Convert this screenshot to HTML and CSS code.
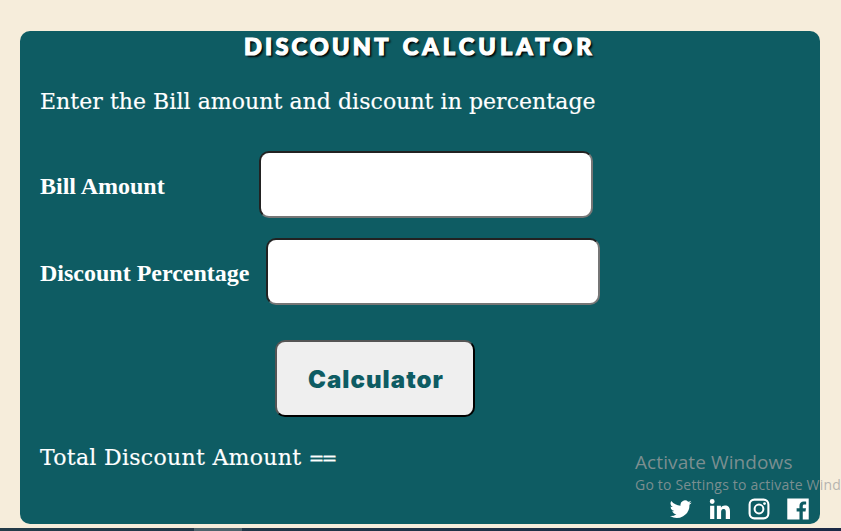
FILE: index.html
```html
<!DOCTYPE html>
<html lang="en">
<head>
<meta charset="utf-8">
<title>Discount Calculator</title>
<link rel="stylesheet" href="styles.css">
</head>
<body>
<main class="card">
  <h1 class="title">DISCOUNT <span class="title-end">CALCULATOR</span></h1>
  <p class="intro">Enter the Bill amount and discount in percentage</p>
  <div class="row row-bill">
    <label for="bill">Bill Amount</label>
    <input id="bill" type="text">
  </div>
  <div class="row row-discount">
    <label for="discount">Discount Percentage</label>
    <input id="discount" type="text">
  </div>
  <button class="calculate" type="button">Calculator</button>
  <p class="total">Total Discount Amount <span class="equals">==</span></p>
  <div class="social">
    <svg viewBox="0 0 24 24"><path d="M23.6 4.8a9.700 9.700 0 0 1-2.800.8 4.900 4.900 0 0 0 2.100-2.700 9.800 9.800 0 0 1-3.100 1.200A4.900 4.900 0 0 0 11.500 8.500 13.900 13.900 0 0 1 1.400 3.400a4.900 4.900 0 0 0 1.500 6.500 4.900 4.900 0 0 1-2.200-.6 4.900 4.900 0 0 0 3.900 4.900 4.900 4.900 0 0 1-2.200.1 4.900 4.900 0 0 0 4.600 3.400A9.900 9.900 0 0 1 0 19.700 13.900 13.900 0 0 0 21.200 7.300a10 10 0 0 0 2.400-2.500z"/></svg>
    <svg viewBox="0 0 24 24"><path d="M1.200 8.500h4.600V23H1.200zM3.500 1.200a2.650 2.650 0 1 1 0 5.300 2.650 2.650 0 0 1 0-5.300zM8.600 8.500H13v2c.8-1.400 2.300-2.400 4.400-2.400 4.600 0 5.500 3 5.500 7V23h-4.600v-7c0-1.700 0-3.900-2.300-3.900-2.400 0-2.800 1.800-2.800 3.700V23H8.600z"/></svg>
    <svg viewBox="0 0 24 24"><path fill-rule="evenodd" d="M7 .6h10A6.400 6.400 0 0 1 23.400 7v10a6.400 6.400 0 0 1-6.400 6.400H7A6.400 6.400 0 0 1 .6 17V7A6.400 6.400 0 0 1 7 .6zM7 2.900A4.100 4.100 0 0 0 2.900 7v10A4.100 4.100 0 0 0 7 21.100h10a4.100 4.100 0 0 0 4.100-4.100V7A4.100 4.100 0 0 0 17 2.900zM12 6.100a5.900 5.900 0 1 1 0 11.800 5.900 5.900 0 0 1 0-11.800zm0 2.200a3.700 3.700 0 1 0 0 7.400 3.700 3.700 0 0 0 0-7.400z"/><circle cx="18" cy="6" r="1.500"/></svg>
    <svg viewBox="0 0 24 24"><path d="M.3.500h23.400v23h-6.500v-8.900h3l.5-3.500h-3.500V9c0-1.100.4-1.800 1.900-1.800h1.800V4c-.4-.1-1.500-.2-2.700-.2-2.800 0-4.600 1.700-4.600 4.800v2.500h-3.100v3.500h3.100v8.900H.3z"/></svg>
  </div>
</main>
<aside class="activation">
  <div class="activation-title">Activate Windows</div>
  <div class="activation-text">Go to Settings to activate Wind</div>
</aside>
<div class="taskbar"><div class="taskbar-item"></div></div>
</body>
</html>
```
FILE: styles.css
```css
* { box-sizing: border-box; }
body {
  margin: 0;
  height: 531px;
  display: flex;
  flex-direction: column;
  overflow: hidden;
  background: #f6eddb;
}
.card {
  width: 800px;
  height: 493px;
  margin: 31px 0 0 20px;
  display: flex;
  flex-direction: column;
  flex: none;
  border-radius: 10px;
  background: #0e5c63;
  color: #fff;
}
.title {
  margin: 0 0 0 224px;
  height: 32px;
  font: 900 23.500px/31px Lato, sans-serif;
  letter-spacing: 3.200px;
  word-spacing: 3px;
  white-space: nowrap;
  -webkit-text-stroke: 1.200px #fff;
  text-shadow: 2px 2px 2px #000;
}
.title-end { letter-spacing: 4.100px; }
.intro, .total {
  margin: 0 0 0 20px;
  font: 22px/34px "DejaVu Serif", serif;
  white-space: nowrap;
  -webkit-text-stroke: .15px #fff;
}
.intro { margin-top: 22px; height: 34px; letter-spacing: .05px; }
.row {
  display: flex;
  align-items: center;
  margin-left: 20px;
  height: 67px;
  font: bold 24px/28px "Liberation Serif", serif;
}
.row label { white-space: nowrap; padding-top: 2px; }
.row-bill { margin-top: 32px; }
.row-bill label { width: 219.300px; }
.row-discount { margin-top: 20px; }
.row-discount label { width: 226.300px; }
.row input {
  width: 333.400px;
  height: 67px;
  padding: 0;
  border: 2px solid;
  border-color: #222 #767676 #767676 #222;
  border-radius: 10px;
  background: #fff;
  outline: 0;
}
.calculate {
  width: 200px;
  height: 77px;
  margin: 35px 0 0 255px;
  padding: 3px 0 0 2px;
  border: 2px solid;
  border-color: #555 #000 #000 #555;
  border-radius: 10px;
  background: #efefef;
  color: #0e5c63;
  font: 900 24px/30px Inter, sans-serif;
  letter-spacing: 1.050px;
  white-space: nowrap;
}
.total { margin-top: 24px; height: 34px; letter-spacing: .3px; }
.equals { font-size: 18.500px; letter-spacing: -2.500px; -webkit-text-stroke: .4px #fff; }
.social {
  display: flex;
  gap: 17px;
  margin: 23px 0 0 650px;
}
.social svg { width: 22px; height: 22px; fill: #fff; }
.activation {
  position: absolute;
  left: 635px;
  top: 449px;
  width: 206px;
  white-space: nowrap;
  color: rgba(160, 160, 160, .75);
  font-family: "Open Sans", sans-serif;
}
.activation-title { font-size: 19px; line-height: 26px; letter-spacing: .1px; }
.activation-text { font-size: 14px; line-height: 20px; letter-spacing: .2px; }
.taskbar {
  height: 3px;
  margin-top: 4px;
  padding-left: 194px;
  background: linear-gradient(90deg, #233c49, #1b2945);
}
.taskbar-item { width: 48px; height: 3px; background: #4d636c; }
```
